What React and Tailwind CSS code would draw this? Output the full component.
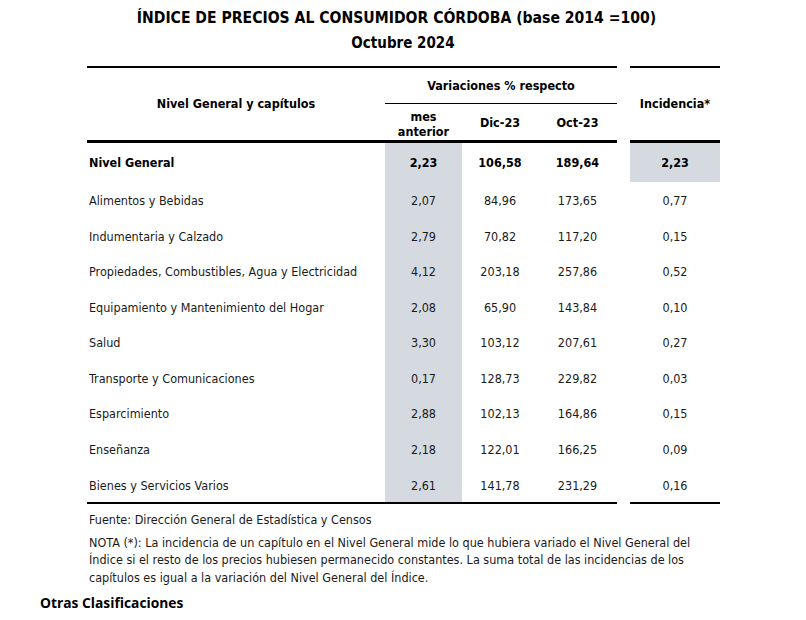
import React from "react";

const rows = [
  ["Alimentos y Bebidas", "2,07", "84,96", "173,65", "0,77"],
  ["Indumentaria y Calzado", "2,79", "70,82", "117,20", "0,15"],
  ["Propiedades, Combustibles, Agua y Electricidad", "4,12", "203,18", "257,86", "0,52"],
  ["Equipamiento y Mantenimiento del Hogar", "2,08", "65,90", "143,84", "0,10"],
  ["Salud", "3,30", "103,12", "207,61", "0,27"],
  ["Transporte y Comunicaciones", "0,17", "128,73", "229,82", "0,03"],
  ["Esparcimiento", "2,88", "102,13", "164,86", "0,15"],
  ["Enseñanza", "2,18", "122,01", "166,25", "0,09"],
  ["Bienes y Servicios Varios", "2,61", "141,78", "231,29", "0,16"],
];

function Row({ label, mes, dic, oct, inc }) {
  return (
    <div className="flex h-[35.6px] items-center pt-[3px] text-[12.5px] text-[#1a1a1a]">
      <div className="w-[298px] pl-[2px]">{label}</div>
      <div className="-mt-[3px] flex h-[35.6px] w-[77px] items-center justify-center bg-[#d5dae1] pt-[3px]">{mes}</div>
      <div className="w-[76px] text-center">{dic}</div>
      <div className="w-[79px] text-center">{oct}</div>
      <div className="w-[13px]" />
      <div className="w-[90px] text-center">{inc}</div>
    </div>
  );
}

export default function App() {
  return (
    <div
      className="relative h-[620px] w-[806px] overflow-hidden bg-white"
      style={{ fontFamily: '"DejaVu Sans Condensed", "DejaVu Sans", sans-serif' }}
    >
      <div className="pt-[8px] text-center font-bold text-black">
        <div className="pr-[13px] text-[15.6px] leading-[20px]">
          ÍNDICE DE PRECIOS AL CONSUMIDOR CÓRDOBA (base 2014 =100)
        </div>
        <div className="mt-[5px] text-[15px] leading-[20px]">Octubre 2024</div>
      </div>

      <div className="ml-[87px] mt-[13px] w-[633px]">
        {/* header */}
        <div className="flex text-[12.5px] font-bold text-black">
          <div className="flex w-[530px] border-t-2 border-b-[3px] border-black">
            <div className="flex w-[298px] items-center justify-center">Nivel General y capítulos</div>
            <div className="flex w-[232px] flex-col">
              <div className="flex h-[36px] items-center justify-center border-b border-black pt-[1px]">
                Variaciones % respecto
              </div>
              <div className="flex h-[36px] items-center pt-[3px]">
                <div className="w-[77px] text-center leading-[15px]">
                  mes
                  <br />
                  anterior
                </div>
                <div className="w-[76px] text-center">Dic-23</div>
                <div className="w-[79px] text-center">Oct-23</div>
              </div>
            </div>
          </div>
          <div className="w-[13px]" />
          <div className="flex w-[90px] items-center justify-center border-t-2 border-b-[3px] border-black">
            Incidencia*
          </div>
        </div>

        {/* nivel general */}
        <div className="flex h-[39px] items-center text-[12.5px] font-bold text-black">
          <div className="w-[298px] pl-[2px] pt-[1px]">Nivel General</div>
          <div className="flex h-full w-[77px] items-center justify-center bg-[#d5dae1] pt-[1px]">2,23</div>
          <div className="w-[76px] pt-[1px] text-center">106,58</div>
          <div className="w-[79px] pt-[1px] text-center">189,64</div>
          <div className="w-[13px]" />
          <div className="flex h-full w-[90px] items-center justify-center bg-[#d5dae1] pt-[1px]">2,23</div>
        </div>

        {rows.map(([label, mes, dic, oct, inc]) => (
          <Row key={label} label={label} mes={mes} dic={dic} oct={oct} inc={inc} />
        ))}

        <div className="flex">
          <div className="w-[530px] border-t-2 border-black" />
          <div className="w-[13px]" />
          <div className="w-[90px] border-t-2 border-black" />
        </div>
      </div>

      <div className="ml-[89px] mt-[7px] w-[620px] text-[12.5px] text-[#1a1a1a]">
        <p className="leading-[17.5px]">Fuente: Dirección General de Estadística y Censos</p>
        <p className="mt-[5px] leading-[17.5px]">
          NOTA (*): La incidencia de un capítulo en el Nivel General mide lo que hubiera variado el Nivel General del
          Índice si el resto de los precios hubiesen permanecido constantes. La suma total de las incidencias de los
          capítulos es igual a la variación del Nivel General del Índice.
        </p>
      </div>

      <div
        className="ml-[40px] mt-[7px] text-[13.8px] font-bold text-black"
        style={{ fontFamily: '"Open Sans", sans-serif' }}
      >
        Otras Clasificaciones
      </div>
    </div>
  );
}
